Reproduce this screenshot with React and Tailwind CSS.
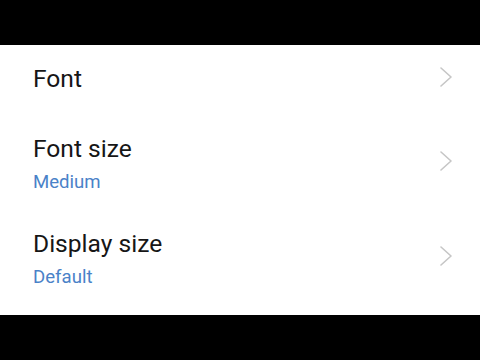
const rows = [
  { title: "Font", pad: "pt-[20px] pb-[24px]", nudge: "mb-[4px]" },
  { title: "Font size", sub: "Medium", pad: "py-[18px]", nudge: "mb-[7px]" },
  { title: "Display size", sub: "Default", pad: "py-[18px]", nudge: "mb-[7px]" },
];

function Chevron({ className }) {
  return (
    <svg width="12" height="20" viewBox="0 0 12 20" className={className}>
      <polyline
        points="1,1 11,10 1,19"
        fill="none"
        stroke="#c6c6c6"
        strokeWidth="1.6"
        strokeLinecap="round"
        strokeLinejoin="round"
      />
    </svg>
  );
}

export default function App() {
  return (
    <div
      className="flex h-[360px] w-[480px] flex-col bg-black"
      style={{ fontFamily: "Roboto, 'Noto Sans', sans-serif" }}
    >
      <div className="h-[45px] shrink-0" />
      <div className="flex h-[270px] flex-col bg-white pb-[8px]">
        {rows.map((row) => (
          <div
            key={row.title}
            className={`flex items-center justify-between pl-[33px] pr-[28px] ${row.pad}`}
          >
            <div className="flex flex-col">
              <span className="text-[24.6px] leading-[28px] text-[#161616]">
                {row.title}
              </span>
              {row.sub && (
                <span className="mt-[7px] text-[18.6px] leading-[24px] text-[#4a82c8]">
                  {row.sub}
                </span>
              )}
            </div>
            <Chevron className={row.nudge} />
          </div>
        ))}
      </div>
      <div className="flex-1" />
    </div>
  );
}
